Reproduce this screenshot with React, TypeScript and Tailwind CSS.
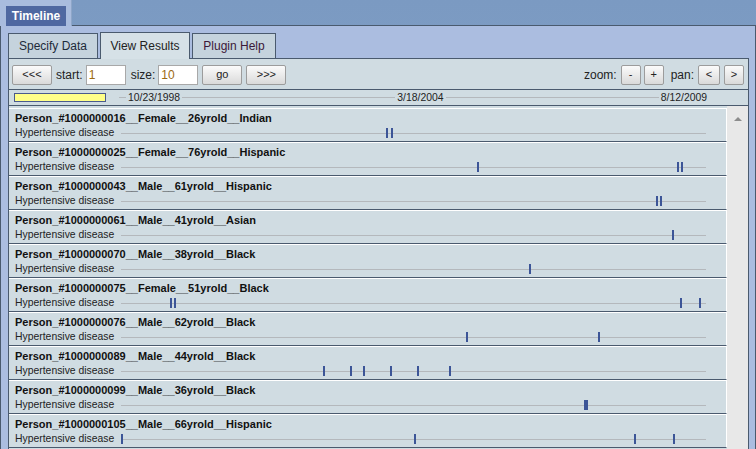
import React from "react";

interface PersonRow {
  name: string;
  condition: string;
  marks: number[];
  wide?: number[];
}

// track starts at x=121 in the page
const TRACK_X = 121;

const rows: PersonRow[] = [
  { name: "Person_#1000000016__Female__26yrold__Indian", condition: "Hypertensive disease", marks: [386, 391] },
  { name: "Person_#1000000025__Female__76yrold__Hispanic", condition: "Hypertensive disease", marks: [477, 677, 681] },
  { name: "Person_#1000000043__Male__61yrold__Hispanic", condition: "Hypertensive disease", marks: [656, 660] },
  { name: "Person_#1000000061__Male__41yrold__Asian", condition: "Hypertensive disease", marks: [672] },
  { name: "Person_#1000000070__Male__38yrold__Black", condition: "Hypertensive disease", marks: [529] },
  { name: "Person_#1000000075__Female__51yrold__Black", condition: "Hypertensive disease", marks: [170, 174, 680, 699] },
  { name: "Person_#1000000076__Male__62yrold__Black", condition: "Hypertensive disease", marks: [466, 598] },
  { name: "Person_#1000000089__Male__44yrold__Black", condition: "Hypertensive disease", marks: [323, 350, 363, 390, 417, 449] },
  { name: "Person_#1000000099__Male__36yrold__Black", condition: "Hypertensive disease", marks: [], wide: [584] },
  { name: "Person_#1000000105__Male__66yrold__Hispanic", condition: "Hypertensive disease", marks: [121, 414, 634, 673] },
];

const Btn: React.FC<{ label: string; w: string }> = ({ label, w }) => (
  <button
    className={`${w} h-[20px] rounded-[2px] border border-[#9c9c9c] bg-gradient-to-b from-[#fbfbfb] to-[#dadada] text-[11px] leading-none text-[#222]`}
  >
    {label}
  </button>
);

const Row: React.FC<{ row: PersonRow }> = ({ row }) => (
  <div className="h-[34px] border-t border-b border-t-white border-b-[#4a5a6e] border-r border-r-white pl-[6px] pt-[2px]">
    <div className="h-[14px] leading-[14px] text-[11px] font-bold text-[#111]">{row.name}</div>
    <div className="flex h-[16px] items-center">
      <div className="w-[106px] text-[10.4px] leading-none text-[#222]">{row.condition}</div>
      <div className="relative h-[16px] w-[585px]">
        <div className="absolute left-0 right-0 top-[8px] h-px bg-[#b4b8bc]" />
        {row.marks.map((x, i) => (
          <div
            key={i}
            className="absolute top-[3px] h-[10px] w-[2px] bg-[#3c5597]"
            style={{ left: x - TRACK_X }}
          />
        ))}
        {row.wide?.map((x, i) => (
          <div
            key={"w" + i}
            className="absolute top-[3px] h-[10px] w-[4px] bg-[#3c5597]"
            style={{ left: x - TRACK_X }}
          />
        ))}
      </div>
    </div>
  </div>
);

const App: React.FC = () => {
  return (
    <div className="flex h-[449px] w-[756px] flex-col overflow-hidden bg-gradient-to-b from-[#7b9ac2] to-[#89a7cb] font-['Liberation_Sans',Arial,sans-serif]">
      {/* header */}
      <div className="flex h-[26px] shrink-0">
        <div className="h-[26px] w-[72px] border-r border-[#8ea6c8] bg-[#a9bcde] pl-[6px] pt-[6px]">
          <div className="flex h-[20px] w-[60px] items-center justify-center bg-[#4f68a1] text-[12px] font-bold text-white">
            Timeline
          </div>
        </div>
        <div className="flex-1 border-b border-[#4a5a6e]" />
      </div>

      {/* panel */}
      <div className="flex min-h-0 flex-1 flex-col border-l border-r border-[#4a5a6e] bg-[#abbde0] pl-[7px] pr-[6px] pt-[6px]">
        {/* tabs */}
        <div className="flex h-[26px] shrink-0 items-end gap-[2px]">
          <div className="flex h-[25px] w-[90px] items-center justify-center border border-b-0 border-[#4a5a6e] bg-[#c5d3dd] text-[12px] text-[#1d2b3a]">
            Specify Data
          </div>
          <div className="relative z-10 -mb-px flex h-[27px] w-[90px] items-center justify-center border border-b-0 border-[#4a5a6e] bg-[#d6e1e7] text-[12px] text-[#222]">
            View Results
          </div>
          <div className="flex h-[25px] w-[84px] items-center justify-center border border-b-0 border-[#4a5a6e] bg-[#c5d3dd] text-[12px] text-[#3b1838]">
            Plugin Help
          </div>
        </div>

        {/* content */}
        <div className="flex min-h-0 flex-1 flex-col border border-b-0 border-[#4a5a6e] bg-[#d0dce2]">
          {/* toolbar */}
          <div className="flex h-[31px] shrink-0 items-center border-b border-[#4a5a6e] pl-[3px] pr-[4px] pt-px text-[12px] text-[#222]">
            <Btn label="<<<" w="w-[40px]" />
            <span className="ml-[4px]">start:</span>
            <input
              readOnly
              value="1"
              className="ml-[3px] h-[20px] w-[40px] border border-[#a8a8a8] bg-white px-[2px] text-[12px] text-[#9b6a12] outline-none"
            />
            <span className="ml-[5px]">size:</span>
            <input
              readOnly
              value="10"
              className="ml-[3px] h-[20px] w-[40px] border border-[#a8a8a8] bg-white px-[2px] text-[12px] text-[#9b6a12] outline-none"
            />
            <div className="ml-[4px] flex gap-[4px]">
              <Btn label="go" w="w-[40px]" />
              <Btn label=">>>" w="w-[40px]" />
            </div>
            <div className="flex-1" />
            <span className="mr-[4px]">zoom:</span>
            <div className="flex gap-[3px]">
              <Btn label="-" w="w-[20px]" />
              <Btn label="+" w="w-[20px]" />
            </div>
            <span className="ml-[7px] mr-[4px]">pan:</span>
            <div className="flex gap-[4px]">
              <Btn label="<" w="w-[22px]" />
              <Btn label=">" w="w-[20px]" />
            </div>
          </div>

          {/* axis */}
          <div className="flex h-[16px] shrink-0 items-center border-b border-[#4a5a6e] pl-[5px] text-[10.4px] text-[#222]">
            <div className="h-[9px] w-[92px] border border-[#4a5a8c] bg-[#ffff88]" />
            <div className="ml-[13px] flex w-[588px] items-center">
              <div className="h-px w-[7px] bg-[#b4b8bc]" />
              <span className="px-[2px]">10/23/1998</span>
              <div className="h-px flex-1 bg-[#b4b8bc]" />
              <span className="px-[2px]">3/18/2004</span>
              <div className="h-px flex-1 bg-[#b4b8bc]" />
              <span className="pl-[2px]">8/12/2009</span>
            </div>
          </div>

          {/* rows + scrollbar */}
          <div className="flex min-h-0 flex-1">
            <div className="w-[718px] pt-[2px]">
              {rows.map((r) => (
                <Row key={r.name} row={r} />
              ))}
            </div>
            <div className="flex w-[21px] justify-center bg-[#e8e8e8] pt-[11px]">
              <div className="h-0 w-0 border-x-[4px] border-b-[4px] border-x-transparent border-b-[#8c8c8c]" />
            </div>
          </div>
        </div>
      </div>
    </div>
  );
};

export default App;
